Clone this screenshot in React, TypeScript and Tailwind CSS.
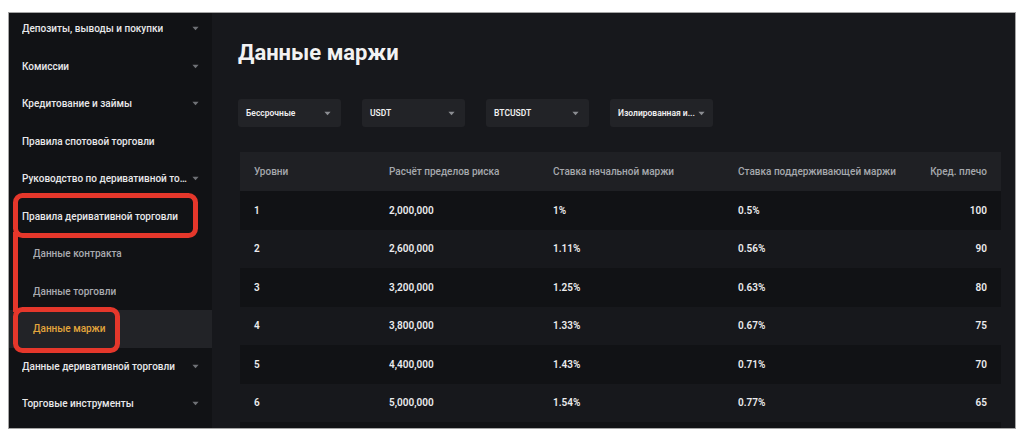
import React from 'react';

interface NavItem {
  label: string;
  sub?: boolean;
  active?: boolean;
  chevron?: boolean;
}

const navItems: NavItem[] = [
  { label: 'Депозиты, выводы и покупки', chevron: true },
  { label: 'Комиссии', chevron: true },
  { label: 'Кредитование и займы', chevron: true },
  { label: 'Правила спотовой торговли' },
  { label: 'Руководство по деривативной торговле', chevron: true },
  { label: 'Правила деривативной торговли' },
  { label: 'Данные контракта', sub: true },
  { label: 'Данные торговли', sub: true },
  { label: 'Данные маржи', sub: true, active: true },
  { label: 'Данные деривативной торговли', chevron: true },
  { label: 'Торговые инструменты', chevron: true },
];

const filters = ['Бессрочные', 'USDT', 'BTCUSDT', 'Изолированная и...'];

const headers = ['Уровни', 'Расчёт пределов риска', 'Ставка начальной маржи', 'Ставка поддерживающей маржи', 'Кред. плечо'];

const rows = [
  ['1', '2,000,000', '1%', '0.5%', '100'],
  ['2', '2,600,000', '1.11%', '0.56%', '90'],
  ['3', '3,200,000', '1.25%', '0.63%', '80'],
  ['4', '3,800,000', '1.33%', '0.67%', '75'],
  ['5', '4,400,000', '1.43%', '0.71%', '70'],
  ['6', '5,000,000', '1.54%', '0.77%', '65'],
  ['7', '5,600,000', '1.67%', '0.83%', '60'],
];

const Caret = ({ className }: { className?: string }) => (
  <svg viewBox="0 0 8 5" className={className} fill="currentColor">
    <path d="M0.5 0.5h7L4 4.5z" />
  </svg>
);

const grid = 'grid grid-cols-[135px_164px_185px_1fr_auto] items-center px-[14px]';

export default function App() {
  return (
    <div
      className="relative h-[442px] w-[1024px] overflow-hidden bg-white pl-[8px] pt-[12px]"
      style={{ fontFamily: 'Roboto, "Noto Sans", sans-serif' }}
    >
      <div className="flex h-[417px] w-[1008px] overflow-hidden border border-[#a5a5a5] bg-[#17181c]">
        <aside className="w-[203px] shrink-0 bg-[#111215]">
          <ul className="-mt-[3px]">
            {navItems.map((item) => (
              <li
                key={item.label}
                className={`flex h-[37.5px] items-center justify-between pr-[13px] text-[10px] font-medium ${
                  item.sub ? 'pl-[24px] text-[#a9abb0]' : 'pl-[13px] text-[#e8e8ea]'
                } ${item.active ? 'bg-[#222327] !text-[#e3a63c]' : ''}`}
              >
                <span className="max-w-[170px] truncate">{item.label}</span>
                {item.chevron && <Caret className="h-[5px] w-[7px] shrink-0 text-[#6f7176]" />}
              </li>
            ))}
          </ul>
        </aside>

        <main className="flex min-w-0 flex-1 flex-col pl-[26px] pr-[14px]">
          <h1 className="pt-[25px] text-[22px] font-bold leading-[30px] text-[#f2f2f3]">Данные маржи</h1>
          <div className="mt-[6px] h-px bg-[#26272b]" />

          <div className="mt-[25px] flex gap-[21px]">
            {filters.map((f) => (
              <div
                key={f}
                className="flex h-[28px] w-[103px] items-center justify-between gap-[3px] rounded-[3px] bg-[#222327] pl-[8px] pr-[10px] text-[8.5px] font-semibold text-[#eeeeef]"
              >
                <span className="whitespace-nowrap">{f}</span>
                <Caret className="h-[5px] w-[7px] shrink-0 text-[#8b8d92]" />
              </div>
            ))}
          </div>

          <div className="mt-[25px] ml-[2px]">
            <div className={`${grid} h-[39px] bg-[#1f2024] text-[10px] font-medium text-[#a5a8ad]`}>
              {headers.map((h, i) => (
                <span key={h} className={i === 4 ? 'text-right' : ''}>
                  {h}
                </span>
              ))}
            </div>
            {rows.map((r, idx) => (
              <div
                key={r[0]}
                className={`${grid} h-[38.5px] text-[10px] font-semibold text-[#ececee] ${
                  idx % 2 === 0 ? 'bg-[#111215]' : 'bg-[#17181c]'
                }`}
              >
                {r.map((c, i) => (
                  <span key={i} className={i === 4 ? 'text-right' : ''}>
                    {c}
                  </span>
                ))}
              </div>
            ))}
          </div>
        </main>
      </div>

      {/* annotation overlay */}
      <svg className="pointer-events-none absolute inset-0 h-[442px] w-[1024px]" viewBox="0 0 1024 442" fill="none">
        <g stroke="#e5372b" strokeWidth="5">
          <rect x="15.5" y="195.5" width="180" height="40" rx="7" />
          <path d="M15.5 232V312" />
          <rect x="15.5" y="309.5" width="102" height="41" rx="7" />
        </g>
      </svg>
    </div>
  );
}
